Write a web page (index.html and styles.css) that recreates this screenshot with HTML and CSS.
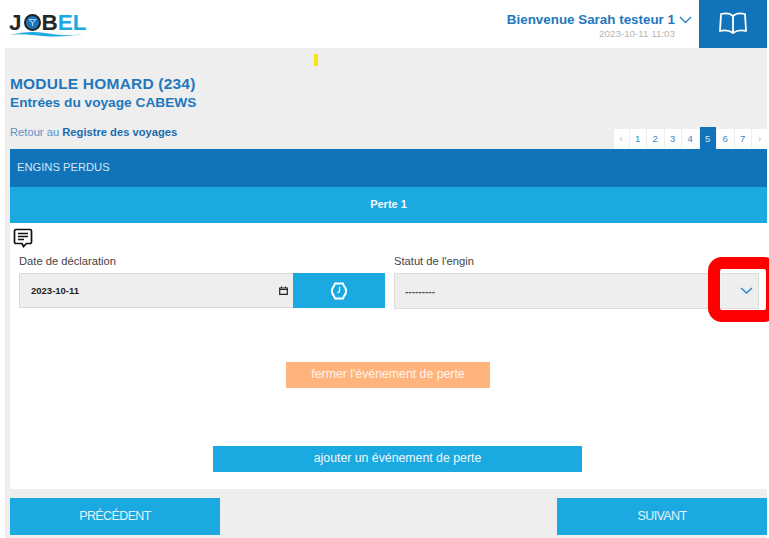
FILE: index.html
```html
<!DOCTYPE html>
<html lang="fr">
<head>
<meta charset="utf-8">
<title>Engins perdus</title>
<link rel="stylesheet" href="styles.css">
</head>
<body>
<header class="topbar">
  <div class="logo">
    <span class="logo-text"><span class="logo-dark">J</span><span class="logo-o"><svg width="17" height="17" viewBox="0 0 17 17"><circle cx="8.5" cy="8.5" r="7.500" fill="#1c72b8" stroke="#222" stroke-width="2"/><path d="M5.500 5.500h6L8.500 9zM8.500 9v3" fill="none" stroke="#9fd4f0" stroke-width="1.100"/></svg></span><span class="logo-dark">B</span><span class="logo-blue">EL</span></span>
    <svg class="logo-wave" width="78" height="8" viewBox="0 0 78 8"><path d="M1 5C14 2 24 1 36 3s26 4 41 0C62 7 46 7 34 6S14 3 1 5z" fill="#1ba9e1"/></svg>
  </div>
  <div class="user">
    <div class="user-line">
      <span class="user-name">Bienvenue Sarah testeur 1</span>
      <svg width="13" height="8" viewBox="0 0 13 8"><path d="M1 1l5.500 5.500L12 1" fill="none" stroke="#2d7fc1" stroke-width="1.400"/></svg>
    </div>
    <div class="user-time">2023-10-11 11:03</div>
  </div>
  <div class="book">
    <svg width="30" height="26" viewBox="0 0 30 26"><path d="M15 5C12 2 7 2 3 3L2 20c4-1 9-1 13 2 4-3 9-3 13-2L27 3c-4-1-9-1-12 2zM15 5v17" fill="none" stroke="#fff" stroke-width="1.800" stroke-linejoin="round"/></svg>
  </div>
</header>
<main class="page">
  <span class="marker"></span>
  <h1 class="title">MODULE HOMARD (234)</h1>
  <h2 class="subtitle">Entrées du voyage CABEWS</h2>
  <div class="nav-row">
    <p class="back">Retour au <strong>Registre des voyages</strong></p>
    <ul class="pager">
      <li>‹</li><li>1</li><li>2</li><li>3</li><li>4</li><li class="active">5</li><li>6</li><li>7</li><li>›</li>
    </ul>
  </div>
  <section class="panel">
    <div class="panel-head">ENGINS PERDUS</div>
    <div class="panel-sub">Perte 1</div>
    <div class="panel-body">
      <svg class="comment" width="20" height="20" viewBox="0 0 20 20"><path d="M3 1.500h14a1.500 1.500 0 0 1 1.500 1.500v11a1.500 1.500 0 0 1-1.500 1.500h-3.500L10.500 18.500 9 15.500H3A1.500 1.500 0 0 1 1.500 14V3A1.500 1.500 0 0 1 3 1.500z" fill="#fff" stroke="#111" stroke-width="1.700"/><path d="M5 5.500h10M5 8.500h10M5 11.500h6" stroke="#111" stroke-width="1.500"/></svg>
      <div class="fields">
        <div class="field field-date">
          <label class="label">Date de déclaration</label>
          <div class="date-group">
            <div class="date-input">
              <span>2023-10-11</span>
              <svg width="9" height="9" viewBox="0 0 9 9"><path d="M.7 2h7.600v6.300H.7zM.7 3.500h7.600M2.500.5v1.500M6.500.5v1.500" fill="none" stroke="#222" stroke-width="1.200"/></svg>
            </div>
            <div class="time-btn">
              <svg width="16" height="18" viewBox="0 0 16 18"><path d="M4 1.500h8l1 2.500a7 7 0 0 1 0 10l-1 2.500H4L3 14a7 7 0 0 1 0-10z" fill="none" stroke="#fff" stroke-width="2"/><path d="M8.500 5v4.500L6.500 11" fill="none" stroke="#fff" stroke-width="1.200"/></svg>
            </div>
          </div>
        </div>
        <div class="field field-status">
          <label class="label">Statut de l'engin</label>
          <div class="select">
            <span>---------</span>
            <svg width="13" height="8" viewBox="0 0 13 8"><path d="M1 1l5.500 5L12 1" fill="none" stroke="#2d85c8" stroke-width="1.500"/></svg>
          </div>
        </div>
      </div>
      <div class="btn btn-close">fermer l'événement de perte</div>
      <div class="btn btn-add">ajouter un événement de perte</div>
    </div>
  </section>
  <div class="footer-nav">
    <div class="nav-btn">PRÉCÉDENT</div>
    <div class="nav-btn nav-next">SUIVANT</div>
  </div>
</main>
<div class="highlight"></div>
</body>
</html>
```
FILE: styles.css
```css
* { box-sizing: border-box; }
html, body { margin: 0; padding: 0; height: 538px; overflow: hidden; background: #fff; }
body { position: relative; font-family: "Liberation Sans", Arial, sans-serif; color: #222; }

.topbar { height: 48px; display: flex; align-items: flex-start; padding-right: 2px; }
.logo { margin: 10px 0 0 9px; width: 78px; position: relative; }
.logo-text { display: flex; align-items: center; font-weight: 700; font-size: 22.500px; line-height: 25px; }
.logo-dark { color: #262626; }
.logo-blue { color: #1ba9e1; }
.logo-o { display: flex; margin: 0 1px 0 2px; }
.logo-wave { position: absolute; left: 0; top: 20px; }
.user { margin-left: auto; margin-right: 7px; padding-top: 12px; text-align: right; }
.user-line { display: flex; align-items: center; gap: 4px; height: 15px; }
.user-name { color: #1f78bd; font-weight: 700; font-size: 13.400px; }
.user-time { color: #b5b5b5; font-size: 9.800px; margin: 1px 17px 0 0; line-height: 11px; }
.book { width: 68px; height: 48px; background: #1173b9; display: flex; align-items: center; justify-content: center; }

.page { position: relative; margin: 0 2px 0 5px; height: 490px; padding: 0 0 0 5px; background: #eeeeee; }
.marker { position: absolute; left: 309px; top: 6px; width: 4px; height: 12px; background: #f4e80c; }
.title { margin: 0; padding-top: 28px; font-size: 15.500px; line-height: 16px; font-weight: 700; color: #1f78bd; letter-spacing: .2px; }
.subtitle { margin: 3px 0 0; font-size: 13.700px; line-height: 15px; font-weight: 700; color: #1f78bd; }
.nav-row { display: flex; justify-content: space-between; height: 39px; align-items: flex-start; }
.back { margin: 16px 0 0; font-size: 11.200px; line-height: 13px; color: #5b93c8; }
.back strong { color: #1b6cae; }
.pager { display: flex; list-style: none; margin: 19px 0 0 0; padding: 0; gap: 1px; }
.pager li { width: 16.500px; height: 20px; padding-top: 4px; background: #fff; text-align: center; font-size: 9.500px; line-height: 12px; color: #3f86c2; }
.pager li:first-child, .pager li:last-child { width: 15px; color: #8fb6d8; }
.pager li.active { background: #1173b9; color: #dbeaf5; margin-top: -2px; height: 22px; padding-top: 6px; }

.panel-head { height: 38px; padding-left: 7px; background: #1173b9; color: #d6e5f1; font-size: 11.200px; line-height: 36px; }
.panel-sub { height: 36px; background: #1ba9e1; color: #f2f9fd; font-size: 11px; font-weight: 700; line-height: 35px; text-align: center; }
.panel-body { height: 266px; padding-top: 5px; background: #fff; }
.comment { display: block; margin-left: 3px; }
.fields { display: flex; margin-top: 7px; }
.field-date { margin-left: 9px; width: 366px; }
.field-status { margin-left: 9px; width: 365px; }
.label { display: block; font-size: 11.200px; line-height: 13px; color: #444; margin-bottom: 5px; }
.date-group { display: flex; height: 35px; }
.date-input { flex: 1; display: flex; align-items: center; justify-content: space-between; padding: 0 5px 0 11px; background: #eeeeee; border: 1px solid #d9d9d9; border-right: 0; font-size: 9.500px; font-weight: 700; color: #222; }
.time-btn { width: 92px; background: #1ba9e1; display: flex; align-items: center; justify-content: center; }
.select { height: 36px; display: flex; align-items: center; justify-content: space-between; padding: 0 5px 0 10px; background: #eeeeee; border: 1px solid #dcdcdc; font-size: 10px; font-weight: 700; color: #555; }
.btn { display: block; color: #fff; text-align: center; }
.btn-close { width: 204px; height: 26px; margin: 53px 0 0 276px; background: #ffb47d; font-size: 12.300px; line-height: 25px; color: #fff3ea; }
.btn-add { width: 369px; height: 26px; margin: 58px 0 0 203px; background: #1ba9e1; font-size: 12.300px; line-height: 25px; color: #eef8fd; }

.footer-nav { display: flex; justify-content: space-between; margin-top: 9px; }
.nav-btn { width: 210px; height: 37px; background: #1ba9e1; color: #e3f3fb; font-size: 12.500px; letter-spacing: -.6px; line-height: 36px; text-align: center; }
.nav-next { width: 210px; }

.highlight { position: absolute; left: 708px; top: 257px; width: 70px; height: 65px; border: 12px solid #ff0000; border-radius: 14px; box-shadow: inset 0 0 0 1px rgba(255,255,255,.6); }
```
